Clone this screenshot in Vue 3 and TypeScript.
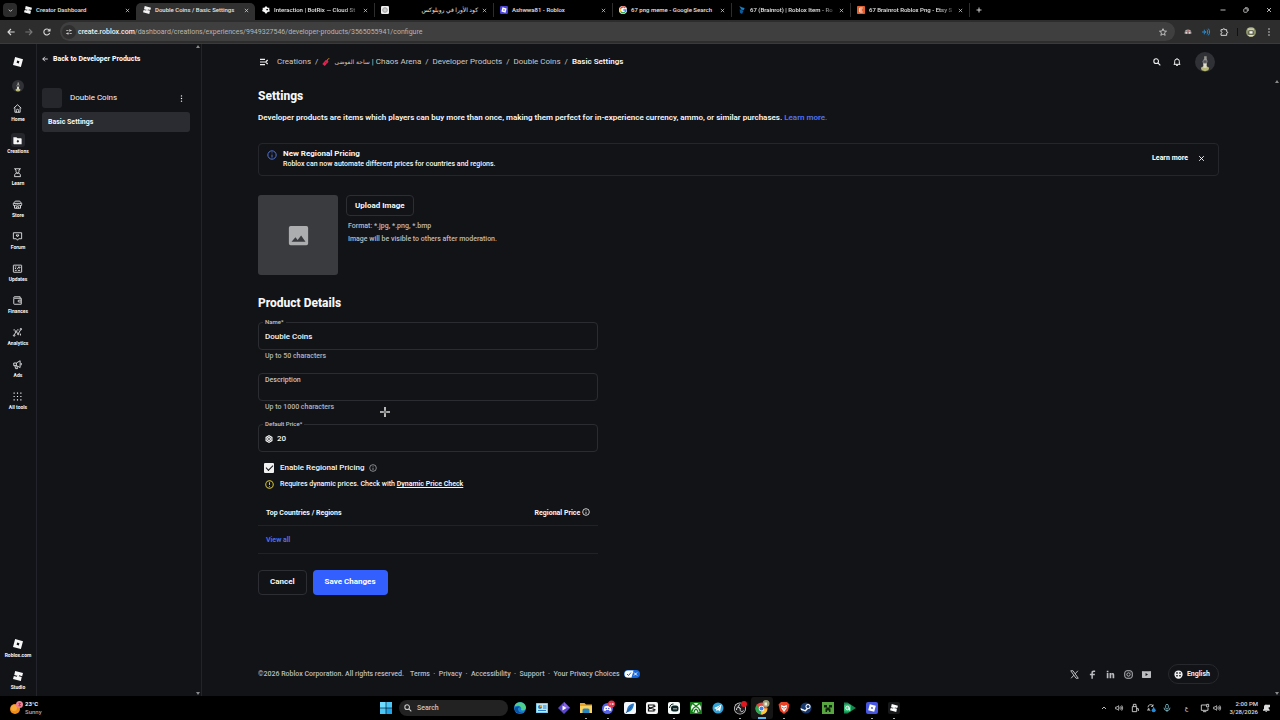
<script setup lang="ts">
import { h, ref } from 'vue'

interface Glyph { d: string; solid?: boolean; w?: number }
interface Shape { d: string; c: string; line?: number }
interface App { name: string; shapes: Shape[]; running?: boolean; active?: boolean }

const circle = (x: number, y: number, r: number) =>
  `M${x - r} ${y}a${r} ${r} 0 1 0 ${2 * r} 0a${r} ${r} 0 1 0 ${-2 * r} 0Z`
const box = (x: number, y: number, w: number, t: number, r = 0) =>
  `M${x + r} ${y}h${w - 2 * r}a${r} ${r} 0 0 1 ${r} ${r}v${t - 2 * r}a${r} ${r} 0 0 1 ${-r} ${r}h${2 * r - w}a${r} ${r} 0 0 1 ${-r} ${-r}v${2 * r - t}a${r} ${r} 0 0 1 ${r} ${-r}Z`

const robloxMark = 'M18.9 24 0 18.9 5.1 0 24 5.1ZM15.4 10.1 10.1 8.6 8.6 13.9 13.9 15.4Z'
const studioMark = 'M5.2 0 24 5 22 12.3 14.6 10.3 14 12.4 3 9.4ZM2 11.7 9.4 13.7 10 11.6 21 14.6 18.8 24 0 19Z'

const glyphs: Record<string, Glyph> = {
  roblox: { d: robloxMark, solid: true },
  studio: { d: studioMark, solid: true },
  close: { d: 'M4 4 20 20M20 4 4 20', w: 3.2 },
  plus: { d: 'M12 2V22M2 12H22', w: 3.6 },
  chevron: { d: 'M4 8 12 16 20 8', w: 4 },
  chevronUp: { d: 'M4 16 12 8 20 16', w: 3.4 },
  back: { d: 'M23 12H3M12 3 3 12 12 21', w: 3.4 },
  forward: { d: 'M1 12H21M12 3 21 12 12 21', w: 3.2 },
  reload: { d: 'M20 15A9 9 0 1 1 19 7M21 2V9H14', w: 3.2 },
  tune: { d: 'M1 6H8M15 6H23M1 18H8M15 18H23' + circle(15, 6, 3) + circle(8, 18, 3), w: 3 },
  star: { d: 'M12 2 14.8 9 22.5 9.600 16.500 14.500 18.500 22 12 18 5.500 22 7.500 14.500 1.500 9.600 9.2 9Z', w: 2.400 },
  puzzle: { d: 'M3 5H9C8.500 0.500 14.500 0.500 14 5H20V11C24 10.500 24 16 20 15.500V22H3V16C7 16.500 7 10.500 3 11Z', w: 3 },
  waves: { d: 'M3 9V15M7 5V19M11 9V15M15 5C18 9 18 15 15 19M19 2C24 8 24 16 19 22', w: 2.8 },
  dots: { d: circle(12, 3, 2.4) + circle(12, 12, 2.4) + circle(12, 21, 2.4), solid: true },
  minimize: { d: 'M2 12H22', w: 3.200 },
  restore: { d: box(3, 7, 14, 14, 3) + 'M8 3H16A5 5 0 0 1 21 8V16', w: 3 },
  home: { d: 'M2 11 12 2 22 11M5 9.500V22H19V9.500M9 22V17A3 3 0 0 1 15 17V22', w: 2.2 },
  creations: { d: 'M1 3H9L12 6H21A2 2 0 0 1 23 8V22H3A2 2 0 0 1 1 20ZM13 10 9.500 14 13 18 16.500 14Z', solid: true },
  learn: { d: 'M4 2H20L16 5V9A4 4 0 0 1 8 9V5ZM9 13 5 17 4 23H20L19 17 15 13 12 16Z', w: 2.2 },
  store: { d: 'M6 3H18L23 9V12A3 3 0 0 1 17 13 4 4 0 0 1 12 13 4 4 0 0 1 7 13 3 3 0 0 1 1 12V9ZM4 14V22H20V14M2 9H22M9 22V18H15V22', w: 2.2 },
  forum: { d: 'M1 2H23V18H15L12 22 9 18H1ZM8 8 12 13 16 8Z', w: 2.2 },
  updates: { d: box(1, 3, 22, 19, 1) + 'M5 8H9M5 12H8M5 17H10M11 14 16 7 17 11 20 9M13 17H19', w: 2.2 },
  finances: { d: 'M2 6V20A2 2 0 0 0 4 22H22V6H4A2 2 0 0 1 4 2H19V6M22 11H16A2.500 2.500 0 0 0 16 16H22', w: 2.2 },
  analytics: { d: circle(3, 20, 2) + circle(8, 9, 2) + circle(14, 16, 2) + circle(21, 3, 2) + 'M4 18 7 11M9.500 10.500 12.500 14.500M15 14 20 5M3 7V3M13 7V3M20 15V20', w: 2.2 },
  ads: { d: 'M2 8H9L19 2V20L9 15H2ZM9 8V15M5 15 7 23H12L10 15.500M22 8V14', w: 2.2 },
  grid: { d: [3, 12, 21].flatMap(y => [3, 12, 21].map(x => box(x - 1.5, y - 1.5, 3, 3))).join(''), solid: true },
  menu: { d: 'M0 4H15M0 12H15M0 20H15M23 6 17 12 23 18', w: 3.400 },
  search: { d: circle(9.500, 9.500, 7) + 'M15 15 22 22', w: 3.2 },
  bell: { d: 'M2 19H22M5 19V10A7 7 0 0 1 19 10V19M12 3V1M9 22H15', w: 3 },
  info: { d: circle(12, 12, 10) + 'M12 11V18M12 6V8', w: 2.400 },
  alert: { d: circle(12, 12, 10) + 'M12 6V13M12 16V18', w: 2.8 },
  robux: { d: 'M12 0 22.500 6V18L12 24 1.500 18V6ZM12 4 5 8V16L12 20 19 16V8ZM12 5.500 17.600 8.700V15.300L12 18.500 6.400 15.300V8.700ZM9.800 9.800V14.200H14.200V9.800Z', solid: true },
  image: { d: 'M3 1H21A2 2 0 0 1 23 3V21A2 2 0 0 1 21 23H3A2 2 0 0 1 1 21V3A2 2 0 0 1 3 1ZM4 19H20L15 12 11 17 8.500 14Z', solid: true },
  x: { d: 'M2 2H8L22 22H16ZM21 2 13.500 10.500M10.500 13.500 3 22', w: 2.6 },
  facebook: { d: 'M9 23V14H5V10H9V7C9 3 11 1 15 1H19V5H16C14 5 13 6 13 7.500V10H18.500L18 14H13V23Z', solid: true },
  linkedin: { d: 'M2 8H6.500V22H2ZM2 2H6.500V6H2ZM9.500 8H14V10C16 6.500 22 7 22 13V22H17.500V14C17.500 10.500 14 10.500 14 14V22H9.500Z', solid: true },
  instagram: { d: box(2, 2, 20, 20, 6) + circle(12, 12, 4.5) + 'M17 6H18', w: 2.6 },
  youtube: { d: 'M4 3H20A3 3 0 0 1 24 7V17A3 3 0 0 1 20 21H4A3 3 0 0 1 0 17V7A3 3 0 0 1 4 3ZM9.500 8V16L16 12Z', solid: true },
  globe: { d: 'M12 1A11 11 0 1 0 12 23 11 11 0 1 0 12 1ZM6 6H10V10H6ZM14 6H18V10H14ZM6 13H10V17H6ZM14 13H18V17H14Z', solid: true },
  speaker: { d: 'M2 9H6L11 5V19L6 15H2ZM14 9C16 11 16 13 14 15M17 6C20 10 20 14 17 18M20 4C24 9 24 15 20 20', w: 2.2 },
  usb: { d: 'M7 8V1H15V8M4 8H17V23H4ZM17 14H22V21', w: 2.6 },
  mic: { d: box(8, 1, 8, 14, 4) + 'M3 11A9 9 0 0 0 21 11M12 19V24', w: 2.6 },
  network: { d: 'M16 3H1V19H21V12M6 23H16' + box(17, 1, 6, 8), w: 2.6 },
  notify: { d: 'M3 17 6 14V8A6 6 0 0 1 14 2H24V10H20V14L23 17V20H3ZM9 21H16L12.500 24Z', solid: true },
}

const Icon = (props: { name: string }) => {
  const g = glyphs[props.name]
  return h('svg', { viewBox: '0 0 24 24', 'aria-hidden': 'true' }, [
    h('path', g.solid
      ? { d: g.d, fill: 'currentColor', 'fill-rule': 'evenodd' }
      : { d: g.d, fill: 'none', stroke: 'currentColor', 'stroke-width': g.w, 'stroke-linejoin': 'round' }),
  ])
}

const Art = (props: { shapes: Shape[] }) =>
  h('svg', { viewBox: '0 0 24 24', 'aria-hidden': 'true' }, props.shapes.map(s =>
    h('path', s.line
      ? { d: s.d, fill: 'none', stroke: s.c, 'stroke-width': s.line }
      : { d: s.d, fill: s.c, 'fill-rule': 'evenodd' })))

const mini = (d: string, k: number) => d.replace(/-?\d+(\.\d+)?/g, n => String(+n * k + (24 - 24 * k) / 2))
const faceShapes: Shape[] = [
  { d: circle(12, 12, 12), c: '#303136' },
  { d: 'M11 5H14V8L15 11 14 15H10L9 11 11 8Z', c: '#94948f' },
  { d: 'M10 10H14V13H10Z', c: '#55565a' },
  { d: 'M7 19 12 16 17 19 16 22 12 23 8 22Z', c: '#b8b978' },
  { d: 'M10 14H14V19H10Z', c: '#dcdcc8' },
]

const tabs: { title: string; icon: Shape[]; rtl?: boolean; active?: boolean; fade?: boolean }[] = [
  { title: 'Creator Dashboard', icon: [{ d: studioMark, c: '#f4f4f4' }] },
  { title: 'Double Coins / Basic Settings', icon: [{ d: studioMark, c: '#f4f4f4' }], active: true },
  { title: 'Interaction | BotRix — Cloud St', icon: [{ d: 'M12 0 17 5H22V12L24 16 16 19 12 24 8 19 0 15 2 11V5H7Z', c: '#f4f4f4' }, { d: 'M13 9H18V13H13Z', c: '#111' }], fade: true },
  { title: 'كود الأورا في روبلوكس', icon: [{ d: box(0, 0, 24, 24, 4), c: '#eee' }, { d: circle(12, 12, 7), c: '#777', line: 2 }, { d: circle(12, 12, 4), c: '#999', line: 2 }], rtl: true },
  { title: 'Ashwwa81 - Roblox', icon: [{ d: box(0, 0, 24, 24, 4), c: '#4a43d6' }, { d: mini(robloxMark, 0.66), c: '#fff' }] },
  { title: '67 png meme - Google Search', icon: [{ d: circle(12, 12, 12), c: '#fff' }, { d: 'M19 6A9 9 0 0 0 4 8', c: '#ea4335', line: 4 }, { d: 'M4 8A9 9 0 0 0 5 17', c: '#fbbc05', line: 4 }, { d: 'M5 17A9 9 0 0 0 18 18', c: '#34a853', line: 4 }, { d: 'M18 18A9 9 0 0 0 21 12H13', c: '#4285f4', line: 4 }] },
  { title: '67 (Brainrot) | Roblox Item - Ro', icon: [{ d: 'M4 0 11 4 20 6 17 12 10 11Z', c: '#1683cf' }, { d: 'M5 10 17 14 12 24 6 20Z', c: '#0b5c9e' }], fade: true },
  { title: '67 Brainrot Roblox Png - Etsy S', icon: [{ d: box(0, 0, 24, 24, 2), c: '#e0602f' }, { d: 'M17 6H8V18H17M8 12H15', c: '#fff', line: 2.5 }], fade: true },
]

const rail = [
  { label: 'Home', icon: 'home' }, { label: 'Creations', icon: 'creations', active: true },
  { label: 'Learn', icon: 'learn' }, { label: 'Store', icon: 'store' }, { label: 'Forum', icon: 'forum' },
  { label: 'Updates', icon: 'updates' }, { label: 'Finances', icon: 'finances' },
  { label: 'Analytics', icon: 'analytics' }, { label: 'Ads', icon: 'ads' }, { label: 'All tools', icon: 'grid' },
]
const railEnd = [{ label: 'Roblox.com', icon: 'roblox' }, { label: 'Studio', icon: 'studio' }]

const startShapes: Shape[] = [
  { d: 'M0 0H11.400V11.400H0Z', c: '#6fdcff' }, { d: 'M12.600 0H24V11.400H12.600Z', c: '#4cc6f7' },
  { d: 'M0 12.600H11.400V24H0Z', c: '#4cc6f7' }, { d: 'M12.600 12.600H24V24H12.600Z', c: '#1fa4ea' },
]
const apps: App[] = [
  { name: 'Edge', shapes: [{ d: circle(12, 12, 12), c: '#1b7fd0' }, { d: 'M1 9C4 -3 22 -2 24 11 24 17 17 18 14 16 17 9 9 5 1 9Z', c: '#4fd08a' }, { d: 'M8 12C7 18 12 23 19 21 15 25 3 24 1 14 3 9 8 8 12 10Z', c: '#0d4f9e' }] },
  { name: 'Control Panel', shapes: [{ d: box(0, 2, 24, 20, 1), c: '#7cc9ec' }, { d: box(2, 4, 20, 16), c: '#bfe8f8' }, { d: circle(8, 10, 4), c: '#2b7fc4' }, { d: 'M8 10V6A4 4 0 0 1 12 10Z', c: '#f0a32c' }, { d: 'M14 8H21M14 12H21M4 17H20', c: '#2b7fc4', line: 2 }] },
  { name: 'Clip Player', shapes: [{ d: 'M12 0 24 12 12 24 0 12Z', c: '#5b45c8' }, { d: 'M12 0 24 12H12Z', c: '#8a63e0' }, { d: 'M9 7 17 12 9 17Z', c: '#fff' }] },
  { name: 'File Explorer', running: true, shapes: [{ d: 'M0 2H9L12 5H24V22H0Z', c: '#e6a52a' }, { d: 'M0 8H24V22H0Z', c: '#fbd25c' }, { d: 'M5 22V16A3 3 0 0 1 8 13H16A3 3 0 0 1 19 16V22Z', c: '#2786bd' }] },
  { name: 'Discord', running: true, shapes: [{ d: circle(11, 13, 11), c: '#5864e8' }, { d: 'M5 9C9 7 13 7 17 9L19 17 15 18 14 16H8L7 18 3 17Z', c: '#fff' }, { d: circle(8.5, 13, 1.6) + circle(13.500, 13, 1.6), c: '#5864e8' }, { d: circle(19, 4, 7), c: '#e0354b' }, { d: 'M15 4H18.500M19.500 4H23.500M21.500 2V6', c: '#fff', line: 1.5 }] },
  { name: 'Quill', shapes: [{ d: box(0, 0, 24, 24, 4), c: '#f3f6fa' }, { d: 'M20 3C9 4 6 11 5 21 14 19 19 14 20 3Z', c: '#2877c7' }, { d: 'M4 22 15 9', c: '#124a87', line: 1.5 }] },
  { name: 'CapCut', shapes: [{ d: box(0, 0, 24, 24, 4), c: '#f5f5f5' }, { d: 'M16 8V6H5V10L19 16M16 16V18H5V14L19 8', c: '#111', line: 2.4 }] },
  { name: 'Streamlabs', running: true, shapes: [{ d: box(0, 0, 24, 24, 4), c: '#f4fbf9' }, { d: box(6, 7, 15, 12, 5), c: '#0c2222' }, { d: 'M3 12C4 6 7 4 11 4', c: '#0c2222', line: 2 }, { d: 'M12 12V15M16 12V15', c: '#fff', line: 1.8 }] },
  { name: 'Xbox', shapes: [{ d: box(0, 0, 24, 24, 1), c: '#137c17' }, { d: circle(12, 12, 10), c: '#f2f6f2' }, { d: 'M6 4 12 8 18 4M4 19C5 13 9 10 12 9 15 10 19 13 20 19M12 14C9 16 8 18 8 21M12 14C15 16 16 18 16 21', c: '#137c17', line: 2.6 }] },
  { name: 'Telegram', shapes: [{ d: circle(12, 12, 11), c: '#2fa2d8' }, { d: 'M4 12 19 5 16 19 12 16 9 18 8 14Z', c: '#fff' }, { d: 'M9 14 16 8', c: '#2fa2d8', line: 1.4 }] },
  { name: 'OBS Studio', running: true, shapes: [{ d: circle(12, 13, 12), c: '#d8d8d8' }, { d: circle(12, 13, 10.500), c: '#202022' }, { d: 'M12 5C6 8 9 13 13 13M19 17C15 22 11 18 13 13M5 16C5 9 10 9 13 13', c: '#d8d8d8', line: 2 }, { d: circle(20, 4, 6), c: '#e01820' }] },
  { name: 'Chrome', running: true, active: true, shapes: [{ d: circle(11, 13, 12), c: '#e8453c' }, { d: 'M11 13 0.500 7A12 12 0 0 0 10 25Z', c: '#2fa64f' }, { d: 'M11 13H23A12 12 0 0 1 10 25Z', c: '#fcc934' }, { d: circle(11, 13, 5.500), c: '#fff' }, { d: circle(11, 13, 4), c: '#3b7ded' }, { d: circle(20, 3, 7), c: '#9da077' }, { d: 'M17 1H22V7H17Z', c: '#eeeedd' }] },
  { name: 'Brave', running: true, shapes: [{ d: 'M6 0H18L23 5 20 18 12 24 4 18 1 5Z', c: '#ea4227' }, { d: 'M6 6 12 8 18 6 17 13 12 20 7 13Z', c: '#fff' }, { d: 'M12 10V15M8 10 10 12M16 10 14 12', c: '#ea4227', line: 1.6 }] },
  { name: 'Steam', shapes: [{ d: circle(12, 12, 11), c: '#16386c' }, { d: 'M1 12 10 16 15 11 16 14 11 19 2 16Z', c: '#fff' }, { d: circle(16, 9, 5), c: '#fff' }, { d: circle(16, 9, 3), c: '#16386c' }] },
  { name: 'Minecraft', shapes: [{ d: box(0, 0, 24, 24), c: '#57a63f' }, { d: 'M4 6H10V11H14V6H20V11H15V13H17V20H14V17H10V20H7V13H9V11H4Z', c: '#10240d' }] },
  { name: 'Game Booster', shapes: [{ d: 'M0 1H7L24 12 7 23H0Z', c: '#16884f' }, { d: box(0, 5, 14, 14, 3), c: '#38c37b' }, { d: circle(7, 12, 3.500) + 'M7 12H11V17', c: '#fff', line: 1.8 }] },
  { name: 'Roblox', running: true, shapes: [{ d: box(0, 0, 24, 24, 4), c: '#4656e0' }, { d: mini(robloxMark, 0.64), c: '#fff' }] },
  { name: 'Roblox Studio', running: true, shapes: [{ d: box(0, 0, 24, 24, 4), c: '#17181a' }, { d: mini(studioMark, 0.66), c: '#fff' }] },
]

const weatherShapes: Shape[] = [
  { d: circle(10, 14, 10), c: '#f08c1e' }, { d: circle(8, 12, 6), c: '#f9ab3a' },
  { d: circle(19, 5, 7), c: '#f08296' }, { d: 'M17 2.500H21L19 5 21 7.500H17', c: '#6b2437', line: 1.500 },
]
const syncShapes: Shape[] = [
  { d: 'M3 10A8 8 0 0 1 18 6M18 1V7H12M20 10A8 8 0 0 1 18 17M4 13A8 8 0 0 0 10 20M3 21V15H8', c: '#ddd', line: 2.4 },
  { d: circle(20, 19, 6), c: '#1c8fe3' },
]
const extensionShapes: Shape[] = [
  { d: 'M2 11C4 2 20 2 22 11Z', c: '#a9a9a9' }, { d: box(1, 11, 22, 7, 3), c: '#777' },
  { d: circle(7, 14, 3) + circle(17, 14, 3), c: '#e9d0d0' }, { d: 'M10 7H14V10H10Z', c: '#c94a4a' },
]
const profileShapes: Shape[] = [
  { d: circle(12, 12, 12), c: '#8d9269' }, { d: 'M4 3H19V10H4Z', c: '#c9cba9' },
  { d: 'M6 8H18V18H6Z', c: '#42443c' }, { d: 'M8 10H16V16H8Z', c: '#f4f4ee' }, { d: 'M4 19H20L16 23H8Z', c: '#deddb7' },
]
const dynamiteShapes: Shape[] = [
  { d: 'M12 5 20 11 8 24 1 18Z', c: '#e0244f' }, { d: 'M8 11 15 17', c: '#8c1735', line: 2 },
  { d: 'M16 8C16 4 18 2 22 2', c: '#d99a3b', line: 2.6 },
]

const productName = ref('Double Coins')
const description = ref('')
const price = ref('20')
const regional = ref(true)
const bannerOpen = ref(true)
</script>

<template>
  <div class="desktop">
    <header class="tabstrip">
      <button class="tab-menu" aria-label="Search tabs"><Icon name="chevron" /></button>
      <div v-for="t in tabs" :key="t.title" class="tab" :class="{ active: t.active }">
        <Art class="favicon" :shapes="t.icon" />
        <span class="tab-title" :class="{ rtl: t.rtl, fade: t.fade }" :dir="t.rtl ? 'rtl' : 'ltr'">{{ t.title }}</span>
        <button class="tab-close" aria-label="Close tab"><Icon name="close" /></button>
      </div>
      <button class="new-tab" aria-label="New tab"><Icon name="plus" /></button>
      <div class="window-buttons">
        <button aria-label="Minimize"><Icon name="minimize" /></button>
        <button aria-label="Restore"><Icon name="restore" /></button>
        <button aria-label="Close window"><Icon name="close" /></button>
      </div>
    </header>

    <div class="toolbar">
      <button class="tool" aria-label="Back"><Icon name="back" /></button>
      <button class="tool dim" aria-label="Forward"><Icon name="forward" /></button>
      <button class="tool" aria-label="Reload"><Icon name="reload" /></button>
      <div class="address">
        <button class="site-info" aria-label="Site information"><Icon name="tune" /></button>
        <span class="url"><b>create.roblox.com</b>/dashboard/creations/experiences/9949327546/developer-products/3565055941/configure</span>
        <button class="tool" aria-label="Bookmark"><Icon name="star" /></button>
      </div>
      <button class="tool" aria-label="Extension"><Art :shapes="extensionShapes" /></button>
      <button class="tool blue" aria-label="Audio extension"><Icon name="waves" /></button>
      <button class="tool" aria-label="Extensions"><Icon name="puzzle" /></button>
      <span class="divider"></span>
      <button class="tool profile" aria-label="Profile"><Art :shapes="profileShapes" /></button>
      <button class="tool" aria-label="Menu"><Icon name="dots" /></button>
    </div>

    <div class="page">
      <nav class="rail" aria-label="Main">
        <a href="#" class="rail-logo" aria-label="Creator Hub"><Icon name="roblox" /></a>
        <a href="#" class="rail-avatar" aria-label="Account"><Art :shapes="faceShapes" /></a>
        <div class="rail-group">
          <a v-for="r in rail" :key="r.label" href="#" class="rail-item" :class="{ active: r.active }">
            <span class="rail-icon"><Icon :name="r.icon" /></span><span>{{ r.label }}</span>
          </a>
        </div>
        <div class="rail-group end">
          <a v-for="r in railEnd" :key="r.label" href="#" class="rail-item">
            <span class="rail-icon"><Icon :name="r.icon" /></span><span>{{ r.label }}</span>
          </a>
        </div>
      </nav>

      <aside class="side">
        <div class="side-body">
          <a href="#" class="back-link"><Icon name="back" />Back to Developer Products</a>
          <div class="product">
            <span class="thumb"></span><span class="product-name">Double Coins</span>
            <button aria-label="More"><Icon name="dots" /></button>
          </div>
          <a href="#" class="side-item">Basic Settings</a>
        </div>
        <div class="scroll"><i class="up"></i><i class="down"></i></div>
      </aside>

      <div class="main">
        <div class="topbar">
          <button class="collapse" aria-label="Collapse menu"><Icon name="menu" /></button>
          <nav class="crumbs" aria-label="Breadcrumb">
            <a href="#">Creations</a><span>/</span>
            <a href="#" class="experience"><Art :shapes="dynamiteShapes" /><span><bdi class="arabic">ساحة الفوضى</bdi> | Chaos Arena</span></a><span>/</span>
            <a href="#">Developer Products</a><span>/</span>
            <a href="#">Double Coins</a><span>/</span>
            <b>Basic Settings</b>
          </nav>
          <button class="top-icon" aria-label="Search"><Icon name="search" /></button>
          <button class="top-icon" aria-label="Notifications"><Icon name="bell" /></button>
          <button class="top-avatar" aria-label="Profile"><Art :shapes="faceShapes" /></button>
        </div>

        <main>
          <h1>Settings</h1>
          <p class="intro">Developer products are items which players can buy more than once, making them perfect for in-experience currency, ammo, or similar purchases. <a href="#">Learn more.</a></p>

          <section v-if="bannerOpen" class="banner">
            <Icon name="info" />
            <div class="banner-text"><strong>New Regional Pricing</strong><span>Roblox can now automate different prices for countries and regions.</span></div>
            <a href="#">Learn more</a>
            <button aria-label="Dismiss" @click="bannerOpen = false"><Icon name="close" /></button>
          </section>

          <section class="upload">
            <div class="preview"><Icon name="image" /></div>
            <div class="upload-info">
              <button class="outline">Upload Image</button>
              <span>Format: *.jpg, *.png, *.bmp</span>
              <span>Image will be visible to others after moderation.</span>
            </div>
          </section>

          <h2>Product Details</h2>
          <form @submit.prevent>
            <div class="field">
              <label for="name" class="notch">Name*</label>
              <div class="control"><input id="name" v-model="productName" type="text"></div>
              <small>Up to 50 characters</small>
            </div>
            <div class="field">
              <label for="description" class="inner">Description</label>
              <div class="control"><textarea id="description" v-model="description"></textarea></div>
              <small>Up to 1000 characters</small>
              <svg class="pointer" viewBox="0 0 12 12" aria-hidden="true"><path d="M5 0H7V5H12V7H7V12H5V7H0V5H5Z" fill="#d8d8d8" /><path d="M6 4V8M4 6H8" stroke="#555" /></svg>
            </div>
            <div class="field">
              <label for="price" class="notch">Default Price*</label>
              <div class="control"><Icon name="robux" /><input id="price" v-model="price" type="text"></div>
            </div>
            <div class="check">
              <input id="regional" v-model="regional" type="checkbox"><label for="regional">Enable Regional Pricing</label><Icon name="info" />
            </div>
            <p class="warning"><Icon name="alert" /><span>Requires dynamic prices. Check with <a href="#">Dynamic Price Check</a></span></p>
            <table>
              <thead><tr><th>Top Countries / Regions</th><th class="right">Regional Price <Icon name="info" /></th></tr></thead>
              <tbody><tr><td colspan="2"><a href="#">View all</a></td></tr></tbody>
            </table>
            <div class="actions">
              <button type="button" class="outline">Cancel</button>
              <button type="submit" class="primary">Save Changes</button>
            </div>
          </form>
        </main>

        <footer>
          <span class="copy">©2026 Roblox Corporation. All rights reserved.</span>
          <a href="#">Terms</a><i>·</i><a href="#">Privacy</a><i>·</i><a href="#">Accessibility</a><i>·</i><a href="#">Support</a><i>·</i><a href="#">Your Privacy Choices</a>
          <svg class="choices" viewBox="0 0 32 16" aria-hidden="true"><rect width="32" height="16" rx="8" fill="#1769e0" /><path d="M8 1H19L15 15H8A7 7 0 0 1 8 1Z" fill="#fff" /><path d="M6 8 9 11 14 5" fill="none" stroke="#1769e0" stroke-width="2" /><path d="M20 5 26 11M26 5 20 11" stroke="#fff" stroke-width="2" /></svg>
          <div class="social">
            <a v-for="s in ['x', 'facebook', 'linkedin', 'instagram', 'youtube']" :key="s" href="#" :aria-label="s"><Icon :name="s" /></a>
          </div>
          <button class="language"><Icon name="globe" />English</button>
        </footer>
      </div>
      <div class="scroll page-scroll"><i class="up"></i><i class="down"></i></div>
    </div>

    <div class="taskbar">
      <div class="weather"><Art :shapes="weatherShapes" /><div><b>23°C</b><span>Sunny</span></div></div>
      <div class="dock">
        <button class="app" aria-label="Start"><Art :shapes="startShapes" /></button>
        <button class="dock-search"><Icon name="search" />Search</button>
        <button v-for="a in apps" :key="a.name" class="app" :class="{ running: a.running, current: a.active }" :aria-label="a.name"><Art :shapes="a.shapes" /></button>
      </div>
      <div class="tray">
        <Icon name="chevronUp" class="small" /><Icon name="speaker" /><Icon name="usb" /><Art :shapes="syncShapes" /><Icon class="mic" name="mic" />
        <span class="lang">ع</span>
        <span class="pair"><Icon name="network" /><Icon name="speaker" /></span>
        <time><span>2:00 PM</span><span>3/28/2026</span></time>
        <Icon name="notify" />
      </div>
    </div>
  </div>
</template>

<style>
html, body { margin: 0; background: #000; }
</style>

<style scoped>
* { box-sizing: border-box; }
.desktop { display: flex; flex-direction: column; height: 100vh; overflow: hidden; color: #f7f7f8; font: 500 8px/12px Roboto, "DejaVu Sans", sans-serif; background: #000; }
button { display: flex; align-items: center; justify-content: center; padding: 0; border: 0; background: none; color: inherit; font: inherit; }
a { color: inherit; text-decoration: none; }
svg { display: block; flex: none; width: 8px; height: 8px; overflow: visible; }
i { font-style: normal; }

.tabstrip { display: flex; align-items: center; flex: none; height: 20px; font: 500 6px/12px Roboto, "DejaVu Sans", sans-serif; color: #e4e4e4; }
.tab-menu { width: 14px; height: 14px; margin: 0 0 0 3px; border-radius: 4px; background: #2b2b2b; }
.tab-menu svg { width: 5px; height: 5px; }
.tab { display: flex; align-items: center; flex: 0 1 119px; min-width: 0; height: 14px; gap: 4px; padding: 0 6px 0 6px; border-left: 1px solid #2d2d2d; }
.tab:nth-of-type(1), .tab:nth-of-type(2), .tab:nth-of-type(3) { border-color: transparent; }
.tab.active { height: 17px; align-self: flex-end; padding-bottom: 3px; border-radius: 5px 5px 0 0; background: #303030; }
.favicon { width: 8px; height: 8px; }
.tab-title { flex: 1; min-width: 0; white-space: nowrap; }
.tab-title.fade { mask-image: linear-gradient(90deg, #000 82%, #0004 98%); }
.tab-close svg { width: 5px; height: 5px; }
.new-tab { width: 18px; height: 14px; border-left: 1px solid #2d2d2d; }
.new-tab svg { width: 6px; height: 6px; }
.window-buttons { display: flex; margin-left: auto; }
.window-buttons button { width: 23px; height: 20px; }
.window-buttons svg { width: 6px; height: 6px; }

.toolbar { display: flex; align-items: center; flex: none; height: 24px; padding: 0 2px; background: #2d2d2d; border-bottom: 1px solid #3a3a3a; color: #d8d8d8; }
.tool { width: 18px; height: 18px; flex: none; }
.tool svg { width: 8px; height: 8px; }
.tool.dim { color: #777; }
.tool.blue { color: #2b8fd6; }
.tool.profile svg { width: 10px; height: 10px; }
.address { display: flex; align-items: center; flex: 1; min-width: 0; height: 19px; margin: 0 4px 0 4px; padding: 0 3px 0 2px; border-radius: 10px; background: #3f3f3f; }
.site-info { width: 14px; height: 14px; border-radius: 7px; background: #2f2f2f; }
.site-info svg { width: 6px; height: 6px; }
.url { flex: 1; padding-left: 2px; font-weight: 400; font-size: 7px; color: #b5b5b5; white-space: nowrap; overflow: hidden; }
.url b { font-weight: 500; color: #f2f2f2; }
.divider { width: 1px; height: 8px; margin: 0 4px; background: #111; }

.page { display: flex; flex: 1; min-height: 0; background: #121317; }
.rail { display: flex; flex-direction: column; align-items: center; flex: none; width: 37px; padding: 11px 0 4px; border-right: 1px solid #222429; }
.rail-logo, .rail-avatar, .rail-icon { display: flex; align-items: center; justify-content: center; width: 14px; height: 14px; }
.rail-logo svg { width: 10px; height: 10px; }
.rail-avatar { margin: 10px 0 8px; }
.rail-avatar svg { width: 12px; height: 12px; }
.rail-group { display: flex; flex-direction: column; gap: 10px; }
.rail-group.end { margin-top: auto; padding-bottom: 1px; }
.rail-item { display: flex; flex-direction: column; align-items: center; font-size: 5px; font-weight: 700; line-height: 8px; }
.rail-icon svg { width: 9px; height: 9px; }
.end .rail-icon svg { width: 10px; height: 10px; }
.active .rail-icon { border-radius: 3px; background: #25262b; }

.side { display: flex; flex: none; width: 165px; border-right: 1px solid #222429; }
.side-body { flex: 1; padding: 9px 3px 0 5px; margin-right: 3px; }
.back-link { display: flex; align-items: center; gap: 5px; font-size: 7px; font-weight: 800; }
.back-link svg { width: 6px; height: 6px; }
.product { display: flex; align-items: center; gap: 8px; margin-top: 23px; font-weight: 400; }
.thumb { width: 20px; height: 20px; border-radius: 3px; background: #26272c; }
.product-name { flex: 1; }
.product button { width: 18px; }
.product button svg { width: 7px; height: 7px; }
.side-item { display: block; margin-top: 4px; padding: 4px 6px; border-radius: 3px; background: #2b2c31; font-size: 7px; font-weight: 700; }
.scroll { display: flex; flex-direction: column; justify-content: space-between; flex: none; width: 5px; padding: 1px 0; }
.scroll i { width: 4px; height: 3px; background: #8a8a8a; }
.up { clip-path: polygon(50% 0, 100% 100%, 0 100%); }
.down { clip-path: polygon(0 0, 100% 0, 50% 100%); }
.page-scroll { padding-top: 36px; }

.main { display: flex; flex-direction: column; flex: 1; min-width: 0; padding: 8px 56px 12px; }
.topbar { display: flex; align-items: center; height: 20px; padding-right: 4px; color: #c8c9cc; font-weight: 400; }
.collapse { width: 12px; margin-right: 7px; color: #f0f0f0; }
.crumbs { display: flex; align-items: center; flex: 1; gap: 4px; }
.crumbs b { color: #f7f7f8; font-weight: 600; }
.experience { display: flex; align-items: center; gap: 4px; }
.arabic { font: 400 6px/12px "DejaVu Sans", sans-serif; }
.top-icon { width: 20px; height: 20px; color: #f0f0f0; }
.top-avatar { margin-left: 8px; }
.top-avatar svg { width: 20px; height: 20px; }
h1, h2 { margin: 16px 0 0; font-size: 12px; line-height: 16px; font-weight: 800; }
h2 { margin-top: 20px; }
.intro { margin: 8px 0 0; font-weight: 600; }
.intro a, td a { color: #5275f0; }
.banner { display: flex; align-items: flex-start; margin-top: 19px; height: 33px; padding: 5px 8px 0; border: 1px solid #24262b; border-radius: 4px; font-size: 7px; }
.banner > svg { width: 10px; height: 10px; margin-top: 1px; color: #5275d8; }
.banner-text { display: flex; flex-direction: column; flex: 1; margin-left: 6px; line-height: 10px; }
.banner-text strong { font-size: 8px; }
.banner > a { margin-top: 3px; font-weight: 800; }
.banner button { width: 18px; height: 12px; margin: 3px 0 0 4px; }
.banner button svg { width: 7px; height: 7px; }
.upload { display: flex; gap: 8px; margin-top: 19px; }
.preview { display: flex; align-items: center; justify-content: center; width: 80px; height: 80px; border-radius: 3px; background: #393b3f; color: #acadaf; }
.preview svg { width: 21px; height: 21px; }
.upload-info { display: flex; flex-direction: column; align-items: flex-start; font-size: 7px; line-height: 13px; color: #bcbdc0; font-weight: 500; }
.upload-info span { padding-left: 2px; }
.outline { height: 25px; padding: 0 11px; border: 1px solid #2c2e33; border-radius: 4px; color: #f7f7f8; font-size: 8px; font-weight: 700; }
.upload-info .outline { height: 21px; margin-bottom: 4px; padding: 0 8px; }

form { width: 340px; max-width: 100%; margin-top: 11px; }
.field { position: relative; margin-bottom: 11px; }
.control { display: flex; align-items: center; height: 28px; padding: 1px 6px 0; border: 1px solid #2a2c31; border-radius: 4px; }
.control svg { margin-right: 4px; }
.control input, .control textarea { flex: 1; min-width: 0; height: 12px; padding: 0; border: 0; outline: 0; resize: none; background: none; color: #f7f7f8; font: inherit; }
.field label { color: #c3c4c7; }
.notch { position: absolute; left: 5px; top: -4px; padding: 0 2px; background: #121317; font-size: 6px; line-height: 8px; }
.inner { position: absolute; left: 7px; top: 1px; font-size: 7px; }
small { display: block; padding-left: 7px; color: #b4b5b8; font-size: 7px; font-weight: 500; }
.pointer { position: absolute; left: 122px; top: 34px; width: 10px; height: 10px; }
.check { display: flex; align-items: center; height: 14px; margin-top: -2px; padding-left: 6px; }
.check input { appearance: none; width: 10px; height: 10px; margin: 0 6px 0 0; border-radius: 1px; background: #f0f0f0; }
.check input:checked::after { content: ""; display: block; width: 6px; height: 3px; margin: 2px; border: solid #121317; border-width: 0 0 1px 1px; transform: rotate(-45deg); }
.check svg { width: 8px; height: 8px; margin-left: 4px; color: #a4a5a8; }
.warning { display: flex; align-items: center; gap: 6px; margin: 3px 0 10px; padding-left: 7px; font-size: 7px; }
.warning svg { color: #d5c53c; width: 9px; height: 9px; }
.warning a { text-decoration: underline; font-weight: 600; }
table { width: 100%; border-collapse: collapse; font-size: 7px; }
th, td { padding: 1px 8px 0; text-align: left; border-bottom: 1px solid #202227; }
th { height: 25px; font-weight: 700; }
td { height: 28px; font-weight: 600; }
th.right { text-align: right; }
th svg { display: inline-block; width: 8px; height: 8px; margin-bottom: 1px; vertical-align: middle; }
.actions { display: flex; gap: 6px; margin-top: 16px; }
.primary { height: 25px; padding: 0 12px; border-radius: 4px; background: #335fff; color: #fff; font-weight: 700; }

footer { display: flex; align-items: center; height: 20px; margin-top: auto; color: #bcbdc0; font-size: 7px; font-weight: 500; }
.copy { margin-right: 6px; }
footer i { width: 9px; text-align: center; }
.choices { width: 16px; height: 8px; margin-left: 4px; }
.social { display: flex; gap: 9px; margin: 0 17px 0 auto; }
.social svg { width: 9px; height: 9px; }
.language { height: 20px; gap: 4px; padding: 0 8px 0 5px; border: 1px solid #26282d; border-radius: 10px; color: #f0f0f0; font-weight: 700; }
.language svg { width: 9px; height: 9px; }

.taskbar { display: grid; grid-template-columns: 1fr auto 1fr; align-items: center; flex: none; height: 24px; font: 500 6px/8px Roboto, "DejaVu Sans", sans-serif; }
.weather { display: flex; align-items: center; gap: 3px; padding-left: 10px; }
.weather > svg { width: 12px; height: 12px; }
.weather b, .weather span { display: block; }
.weather span { color: #aaa; }
.dock { display: flex; align-items: center; }
.app { position: relative; width: 22px; height: 22px; }
.app svg { width: 12px; height: 12px; }
.app.current { background: #151515; border-radius: 3px; }
.running::after { content: ""; position: absolute; bottom: 0; left: 10px; width: 2px; height: 1px; background: #aaa; }
.running.current::after { left: 7px; width: 8px; height: 2px; background: #55b8e8; }
.dock-search { justify-content: flex-start; gap: 5px; width: 109px; height: 16px; margin: 0 1px 0 2px; padding-left: 5px; border-radius: 8px; background: #222; color: #c8c8c8; font-size: 7px; }
.tray { display: flex; align-items: center; justify-content: flex-end; gap: 8px; padding-right: 10px; color: #ddd; }
.small { width: 6px; height: 6px; }
.mic { color: #7db7c4; }
.lang { width: 14px; text-align: center; }
.pair { display: flex; gap: 4px; }
time { text-align: right; }
time span { display: block; }
time + svg { margin-left: -4px; }
</style>
